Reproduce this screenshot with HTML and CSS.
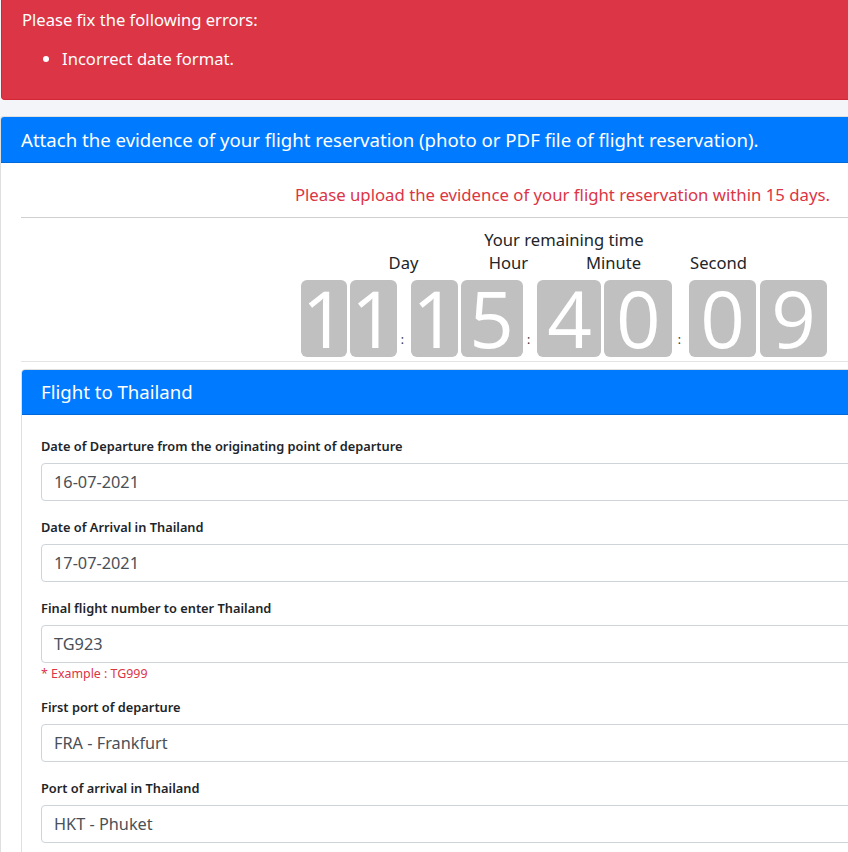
FILE: index.html
```html
<!DOCTYPE html>
<html lang="en">
<head>
<meta charset="utf-8">
<title>Flight reservation</title>
<link rel="stylesheet" href="styles.css">
</head>
<body>
<div class="page">
  <div class="alert">
    <p class="alert-title">Please fix the following errors:</p>
    <ul class="alert-list">
      <li>Incorrect date format.</li>
    </ul>
  </div>

  <div class="card outer">
    <div class="card-header">Attach the evidence of your flight reservation (photo or PDF file of flight reservation).</div>
    <div class="card-body outer-body">
      <p class="notice">Please upload the evidence of your flight reservation within 15 days.</p>
      <hr class="rule">
      <div class="countdown">
        <div class="cd-title">Your remaining time</div>
        <div class="cd-labels">
          <span class="cd-label">Day</span>
          <span class="cd-label">Hour</span>
          <span class="cd-label">Minute</span>
          <span class="cd-label">Second</span>
        </div>
        <div class="cd-digits">
          <span class="digit w47">1</span>
          <span class="digit w47">1</span>
          <span class="colon">:</span>
          <span class="digit w47">1</span>
          <span class="digit w63">5</span>
          <span class="colon">:</span>
          <span class="digit w65">4</span>
          <span class="digit w69">0</span>
          <span class="colon wide">:</span>
          <span class="digit w68">0</span>
          <span class="digit w68 gap4">9</span>
        </div>
      </div>
      <hr class="rule light">

      <div class="card inner">
        <div class="card-header">Flight to Thailand</div>
        <div class="card-body inner-body">
          <div class="form-group">
            <label class="label">Date of Departure from the originating point of departure</label>
            <div class="input">16-07-2021</div>
          </div>
          <div class="form-group">
            <label class="label">Date of Arrival in Thailand</label>
            <div class="input">17-07-2021</div>
          </div>
          <div class="form-group">
            <label class="label">Final flight number to enter Thailand</label>
            <div class="input">TG923</div>
            <small class="hint">* Example : TG999</small>
          </div>
          <div class="form-group">
            <label class="label">First port of departure</label>
            <div class="input">FRA - Frankfurt</div>
          </div>
          <div class="form-group">
            <label class="label">Port of arrival in Thailand</label>
            <div class="input">HKT - Phuket</div>
          </div>
        </div>
      </div>
    </div>
  </div>
</div>
</body>
</html>
```

FILE: styles.css
```css
* { box-sizing: border-box; }
html, body {
  margin: 0;
  padding: 0;
  background: #f4f5f8;
  overflow: hidden;
}
body {
  font-family: "Noto Sans", "Liberation Sans", sans-serif;
  color: #212529;
  font-size: 16.6px;
  line-height: 24px;
}
.page {
  width: 900px;
  padding-left: 1px;
}
.alert {
  background: #dc3545;
  border: 1px solid #d32535;
  border-top: none;
  border-radius: 0 0 4px 4px;
  color: #fff;
  padding: 8px 20px 12px 20px;
  margin-bottom: 16px;
}
.alert-title {
  margin: 0;
}
.alert-list {
  margin: 15px 0 16px 0;
  padding-left: 40px;
}
.card {
  background: #fff;
  border: 1px solid #dfdfdf;
  border-radius: 4px;
}
.outer {
  margin-left: -1px;
  border-right: none;
}
.card-header {
  background: #007bff;
  color: #fff;
  font-size: 18.6px;
  line-height: 21px;
  padding: 12px 20px;
  border-bottom: 1px solid #0069d9;
  border-radius: 3px 3px 0 0;
}
.outer-body {
  padding: 20px 0 0 20px;
}
.notice {
  margin: 0 70px 0 0;
  text-align: right;
  color: #dc3545;
  font-size: 16.75px;
}
.rule {
  border: none;
  border-top: 1px solid #cfcfcf;
  margin: 10px 0 10px 0;
}
.rule.light {
  border-top-color: #e4e4e4;
  margin: 4px 0 7px 0;
}
.countdown {
  width: 526px;
  margin-left: 280px;
  display: flex;
  flex-direction: column;
}
.cd-title {
  text-align: center;
}
.cd-labels {
  display: flex;
  padding-left: 50px;
  margin-top: -1px;
}
.cd-label {
  width: 105px;
  text-align: center;
}
.cd-digits {
  display: flex;
  margin-top: 5px;
}
.digit {
  display: flex;
  justify-content: center;
  align-items: center;
  height: 77px;
  background: #c0c0c0;
  color: #fff;
  border-radius: 6px;
  font-family: "Open Sans", "Noto Sans", sans-serif;
  font-size: 78px;
  line-height: 77px;
  margin-left: 3px;
}
.digit:first-child { margin-left: 0; }
.digit.gap4 { margin-left: 4px; }
.w47 { width: 47px; }
.w63 { width: 63px; }
.w65 { width: 65px; }
.w68 { width: 68px; }
.w69 { width: 69px; }
.colon {
  width: 12px;
  text-align: center;
  align-self: flex-end;
  font-size: 12px;
  line-height: 12px;
  margin-bottom: 11px;
  color: #333;
}
.colon.wide { width: 14px; }
.inner .card-header {
  padding-left: 19px;
  line-height: 20px;
}
.inner-body {
  padding: 21px 20px 20px 19px;
}
.form-group {
  margin-bottom: 16px;
}
.label {
  display: block;
  font-size: 12.8px;
  line-height: 20px;
  font-weight: 600;
  margin-bottom: 7px;
}
.input {
  height: 38px;
  border: 1px solid #ced4da;
  border-radius: 4px;
  padding: 6px 12px;
  color: #495057;
  font-size: 16.3px;
  line-height: 24px;
  background: #fff;
}
.hint {
  display: block;
  color: #dc3545;
  font-size: 12.4px;
  line-height: 14px;
  margin-top: 4px;
}
```
